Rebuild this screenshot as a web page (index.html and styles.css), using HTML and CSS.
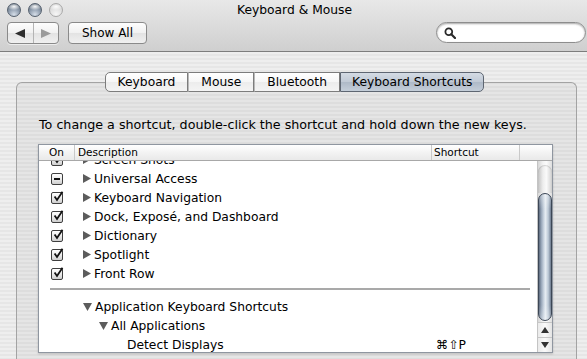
FILE: index.html
```html
<!DOCTYPE html>
<html>
<head>
<meta charset="utf-8">
<title>Keyboard &amp; Mouse</title>
<link rel="stylesheet" href="styles.css">
</head>
<body>
<div class="window">
  <header class="toolbar">
    <div class="titlebar">
      <div class="lights"><span class="light"></span><span class="light"></span><span class="light off"></span></div>
      <div class="title">Keyboard &amp; Mouse</div>
      <div></div>
    </div>
    <div class="tools">
      <div class="navbtn">
        <span class="seg"><svg width="10" height="9" viewBox="0 0 10 9"><polygon points="0,4.5 10,0 10,9" fill="#2e2e2e"/></svg></span>
        <span class="seg"><svg width="10" height="9" viewBox="0 0 10 9"><polygon points="10,4.5 0,0 0,9" fill="#9a9a9a"/></svg></span>
      </div>
      <div class="btn">Show All</div>
      <div class="spacer"></div>
      <div class="search">
        <svg width="12" height="12" viewBox="0 0 12 12"><circle cx="4.8" cy="4.8" r="3.4" fill="none" stroke="#2a2a2a" stroke-width="1.8"/><line x1="7.3" y1="7.3" x2="11" y2="11" stroke="#2a2a2a" stroke-width="2.2" stroke-linecap="round"/></svg>
      </div>
    </div>
  </header>
  <main class="content">
    <nav class="tabs">
      <span class="tab">Keyboard</span>
      <span class="tab">Mouse</span>
      <span class="tab">Bluetooth</span>
      <span class="tab selected">Keyboard Shortcuts</span>
    </nav>
    <section class="panel">
      <p class="hint">To change a shortcut, double-click the shortcut and hold down the new keys.</p>
      <div class="table">
        <div class="thead">
          <div class="th th-on">On</div>
          <div class="th th-desc">Description</div>
          <div class="th th-sc">Shortcut</div>
          <div class="th th-rest"></div>
        </div>
        <div class="tbody">
          <div class="rows">
            <div class="list">
              <div class="row"><span class="cb-cell"><span class="cb"><svg width="12" height="12" viewBox="0 0 12 12"><path d="M2.6 5.6 L5 9 L10.5 0.8" fill="none" stroke="#111" stroke-width="1.8"/></svg></span></span><span class="desc"><svg class="tri" width="8" height="9" viewBox="0 0 8 9"><polygon points="0,0 8,4.5 0,9" fill="#5c5c5c"/></svg>Screen Shots</span></div>
              <div class="row"><span class="cb-cell"><span class="cb"><span class="dash"></span></span></span><span class="desc"><svg class="tri" width="8" height="9" viewBox="0 0 8 9"><polygon points="0,0 8,4.5 0,9" fill="#5c5c5c"/></svg>Universal Access</span></div>
              <div class="row"><span class="cb-cell"><span class="cb"><svg width="12" height="12" viewBox="0 0 12 12"><path d="M2.6 5.6 L5 9 L10.5 0.8" fill="none" stroke="#111" stroke-width="1.8"/></svg></span></span><span class="desc"><svg class="tri" width="8" height="9" viewBox="0 0 8 9"><polygon points="0,0 8,4.5 0,9" fill="#5c5c5c"/></svg>Keyboard Navigation</span></div>
              <div class="row"><span class="cb-cell"><span class="cb"><svg width="12" height="12" viewBox="0 0 12 12"><path d="M2.6 5.6 L5 9 L10.5 0.8" fill="none" stroke="#111" stroke-width="1.8"/></svg></span></span><span class="desc"><svg class="tri" width="8" height="9" viewBox="0 0 8 9"><polygon points="0,0 8,4.5 0,9" fill="#5c5c5c"/></svg>Dock, Exposé, and Dashboard</span></div>
              <div class="row"><span class="cb-cell"><span class="cb"><svg width="12" height="12" viewBox="0 0 12 12"><path d="M2.6 5.6 L5 9 L10.5 0.8" fill="none" stroke="#111" stroke-width="1.8"/></svg></span></span><span class="desc"><svg class="tri" width="8" height="9" viewBox="0 0 8 9"><polygon points="0,0 8,4.5 0,9" fill="#5c5c5c"/></svg>Dictionary</span></div>
              <div class="row"><span class="cb-cell"><span class="cb"><svg width="12" height="12" viewBox="0 0 12 12"><path d="M2.6 5.6 L5 9 L10.5 0.8" fill="none" stroke="#111" stroke-width="1.8"/></svg></span></span><span class="desc"><svg class="tri" width="8" height="9" viewBox="0 0 8 9"><polygon points="0,0 8,4.5 0,9" fill="#5c5c5c"/></svg>Spotlight</span></div>
              <div class="row"><span class="cb-cell"><span class="cb"><svg width="12" height="12" viewBox="0 0 12 12"><path d="M2.6 5.6 L5 9 L10.5 0.8" fill="none" stroke="#111" stroke-width="1.8"/></svg></span></span><span class="desc"><svg class="tri" width="8" height="9" viewBox="0 0 8 9"><polygon points="0,0 8,4.5 0,9" fill="#5c5c5c"/></svg>Front Row</span></div>
              <div class="sep"><span class="rule"></span></div>
              <div class="row"><span class="cb-cell"></span><span class="desc"><svg class="tri" width="9" height="8" viewBox="0 0 9 8"><polygon points="0,0 9,0 4.5,8" fill="#5c5c5c"/></svg>Application Keyboard Shortcuts</span></div>
              <div class="row"><span class="cb-cell"></span><span class="desc indent1"><svg class="tri" width="9" height="8" viewBox="0 0 9 8"><polygon points="0,0 9,0 4.5,8" fill="#5c5c5c"/></svg>All Applications</span></div>
              <div class="row"><span class="cb-cell"></span><span class="desc indent2">Detect Displays</span><span class="sc">⌘⇧P</span></div>
            </div>
          </div>
          <div class="scrollbar">
            <div class="sb-cap"></div>
            <div class="sb-thumb"></div>
            <div class="sb-btn"><svg width="8" height="6" viewBox="0 0 8 6"><polygon points="4,0 8,6 0,6" fill="#333"/></svg></div>
            <div class="sb-btn"><svg width="8" height="6" viewBox="0 0 8 6"><polygon points="0,0 8,0 4,6" fill="#333"/></svg></div>
          </div>
        </div>
      </div>
    </section>
  </main>
</div>
</body>
</html>
```

FILE: styles.css
```css
* { box-sizing: border-box; margin: 0; padding: 0; }
html, body { width: 587px; height: 359px; overflow: hidden; }
body {
  font-family: "Lucida Grande", "DejaVu Sans", sans-serif;
  font-size: 12.3px;
  color: #000;
  background: #ececec;
}
.window { display: flex; flex-direction: column; height: 359px; }

/* toolbar */
.toolbar {
  height: 52px;
  flex: none;
  background: linear-gradient(#e8e8e8, #cfcfcf);
  border-bottom: 1px solid #7d7d7d;
  display: flex;
  flex-direction: column;
}
.titlebar {
  height: 22px;
  display: grid;
  grid-template-columns: 1fr auto 1fr;
  align-items: start;
}
.lights { display: flex; gap: 7px; padding: 3px 0 0 7px; }
.light {
  width: 14px; height: 14px; border-radius: 50%;
  border: 1px solid #55606e;
  background:
    radial-gradient(ellipse 55% 30% at 50% 22%, rgba(255,255,255,.95), rgba(255,255,255,0)),
    radial-gradient(circle at 50% 88%, #d6dee8 0%, #8f9dae 48%, #56626f 100%);
}
.light.off {
  border-color: #a9a9a9;
  background:
    radial-gradient(ellipse 55% 30% at 50% 22%, rgba(255,255,255,.95), rgba(255,255,255,0)),
    radial-gradient(circle at 50% 85%, #f6f6f6 0%, #dcdcdc 60%, #c4c4c4 100%);
}
.title { line-height: 20px; white-space: nowrap; padding-left: 2px; }

.tools { display: flex; align-items: flex-start; padding: 0 1px 0 7px; }
.navbtn {
  width: 52px; height: 22px;
  display: flex;
  border: 1px solid #8a8a8a;
  border-radius: 4px;
  background: linear-gradient(#fdfdfd, #f1f1f1 50%, #e3e3e3 51%, #f0f0f0);
  box-shadow: 0 1px 0 rgba(255,255,255,.6);
}
.seg { flex: 1; display: flex; align-items: center; justify-content: center; }
.seg + .seg { border-left: 1px solid #b4b4b4; }
.btn {
  margin-left: 9px;
  width: 79px; height: 22px;
  border: 1px solid #8a8a8a;
  border-radius: 4px;
  background: linear-gradient(#fdfdfd, #f1f1f1 50%, #e3e3e3 51%, #f0f0f0);
  display: flex; align-items: center; justify-content: center;
  font-size: 12px;
}
.spacer { flex: 1; }
.search {
  width: 150px; height: 21px;
  border: 1px solid #8d8d8d;
  border-radius: 11px;
  background: #fff;
  box-shadow: inset 0 1px 2px rgba(0,0,0,.35);
  display: flex; align-items: center;
  padding-left: 7px;
}

/* content */
.content {
  flex: 1;
  display: flex;
  flex-direction: column;
  padding-top: 20px;
  background: repeating-linear-gradient(#eeeeee 0 2px, #e6e6e6 2px 4px);
}
.tabs {
  display: flex;
  justify-content: center;
  margin-left: 2px;
  margin-bottom: -10px;
  position: relative;
  z-index: 1;
  height: 20px;
}
.tab {
  height: 20px;
  padding: 0 12px;
  display: flex; align-items: center;
  border: 1px solid #7c7c7c;
  border-left: 1px solid #b9b9b9;
  background: linear-gradient(#ffffff, #f6f6f6 50%, #ececec 51%, #f4f4f4);
  white-space: nowrap;
}
.tab:first-child { border-left-color: #7c7c7c; border-radius: 5px 0 0 5px; }
.tab.selected {
  border-color: #5e6672;
  border-radius: 0 5px 5px 0;
  padding: 0 11px;
  background: linear-gradient(#d4dbe4, #c0c9d5 50%, #aeb9c7 51%, #c4ced9);
}
.panel {
  flex: 1;
  margin: 0 10px 0 16px;
  border: 1px solid #a3a3a3;
  border-bottom: none;
  border-radius: 6px 6px 0 0;
  background: rgba(0,0,0,.035);
  padding: 34px 0 0 21px;
}
.hint { line-height: 16px; margin-left: 1px; white-space: nowrap; font-size: 12.7px; }

/* table */
.table {
  margin-top: 11px;
  width: 515px;
  height: 209px;
  border: 1px solid #8f96a0;
  background: #fff;
  box-shadow: 0 1px 2px rgba(0,0,0,.18);
  display: flex;
  flex-direction: column;
}
.thead {
  height: 16px;
  flex: none;
  display: flex;
  border-bottom: 1px solid #a8a8a8;
  background: linear-gradient(#ffffff, #f3f3f3 50%, #e9e9e9);
  font-size: 10.5px;
  line-height: 15px;
}
.th { border-right: 1px solid #c9c9c9; white-space: nowrap; }
.th-on { width: 36px; padding-left: 10px; }
.th-desc { width: 357px; padding-left: 3px; }
.th-sc { width: 88px; padding-left: 2px; }
.th-rest { flex: 1; border-right: none; }

.tbody { flex: 1; display: flex; overflow: hidden; }
.rows { flex: 1; overflow: hidden; }
.list { margin-top: -11px; }
.row { height: 19px; display: flex; align-items: center; white-space: nowrap; }
.cb-cell { width: 36px; flex: none; display: flex; padding-left: 12px; }
.cb {
  width: 12px; height: 12px;
  border: 1px solid #3f3f3f;
  border-radius: 2px;
  background: linear-gradient(#ffffff, #e6e6e6 60%, #cfcfcf);
  display: flex; align-items: center; justify-content: center;
  overflow: visible;
}
.cb svg { margin-top: -2px; margin-right: -2px; overflow: visible; }
.dash { width: 6px; height: 2px; background: #111; }
.desc { width: 357px; flex: none; display: flex; align-items: center; padding-left: 8px; }
.tri { margin-right: 3px; flex: none; }
.indent1 { padding-left: 24px; }
.indent2 { padding-left: 52px; }
.sc { padding-left: 4px; }
.sep { height: 14px; padding: 5px 0 0 11px; }
.rule { display: block; width: 480px; height: 2px; background: #a9a9a9; }

/* scrollbar */
.scrollbar {
  width: 15px;
  flex: none;
  display: flex;
  flex-direction: column;
  border-left: 1px solid #c4c4c4;
  background: linear-gradient(90deg, #d6d6d6, #f3f3f3 35%, #fbfbfb 60%, #dedede);
}
.sb-cap {
  height: 28px;
  margin-top: 4px;
  border-radius: 7px 7px 0 0;
  background: linear-gradient(90deg, #c2c2c2, #ededed 35%, #fafafa 60%, #d0d0d0);
  box-shadow: inset 0 1px 1px rgba(0,0,0,.15);
  flex: none;
}
.sb-thumb {
  height: 128px;
  flex: none;
  margin: 0 0 1px 0;
  border: 1px solid #3c4756;
  border-radius: 7px;
  background:
    linear-gradient(rgba(255,255,255,.35), rgba(255,255,255,0) 12%, rgba(255,255,255,0) 88%, rgba(255,255,255,.3)),
    linear-gradient(90deg, #5d6a7d 0%, #94a3b6 18%, #cfd9e4 42%, #e6ecf2 55%, #b9c6d4 78%, #6c7a8e 100%);
}
.sb-btn {
  height: 15px;
  flex: none;
  display: flex; align-items: center; justify-content: center;
  border-top: 1px solid #c6c6c6;
  background: linear-gradient(90deg, #eaeaea, #fafafa 50%, #e4e4e4);
}
```
